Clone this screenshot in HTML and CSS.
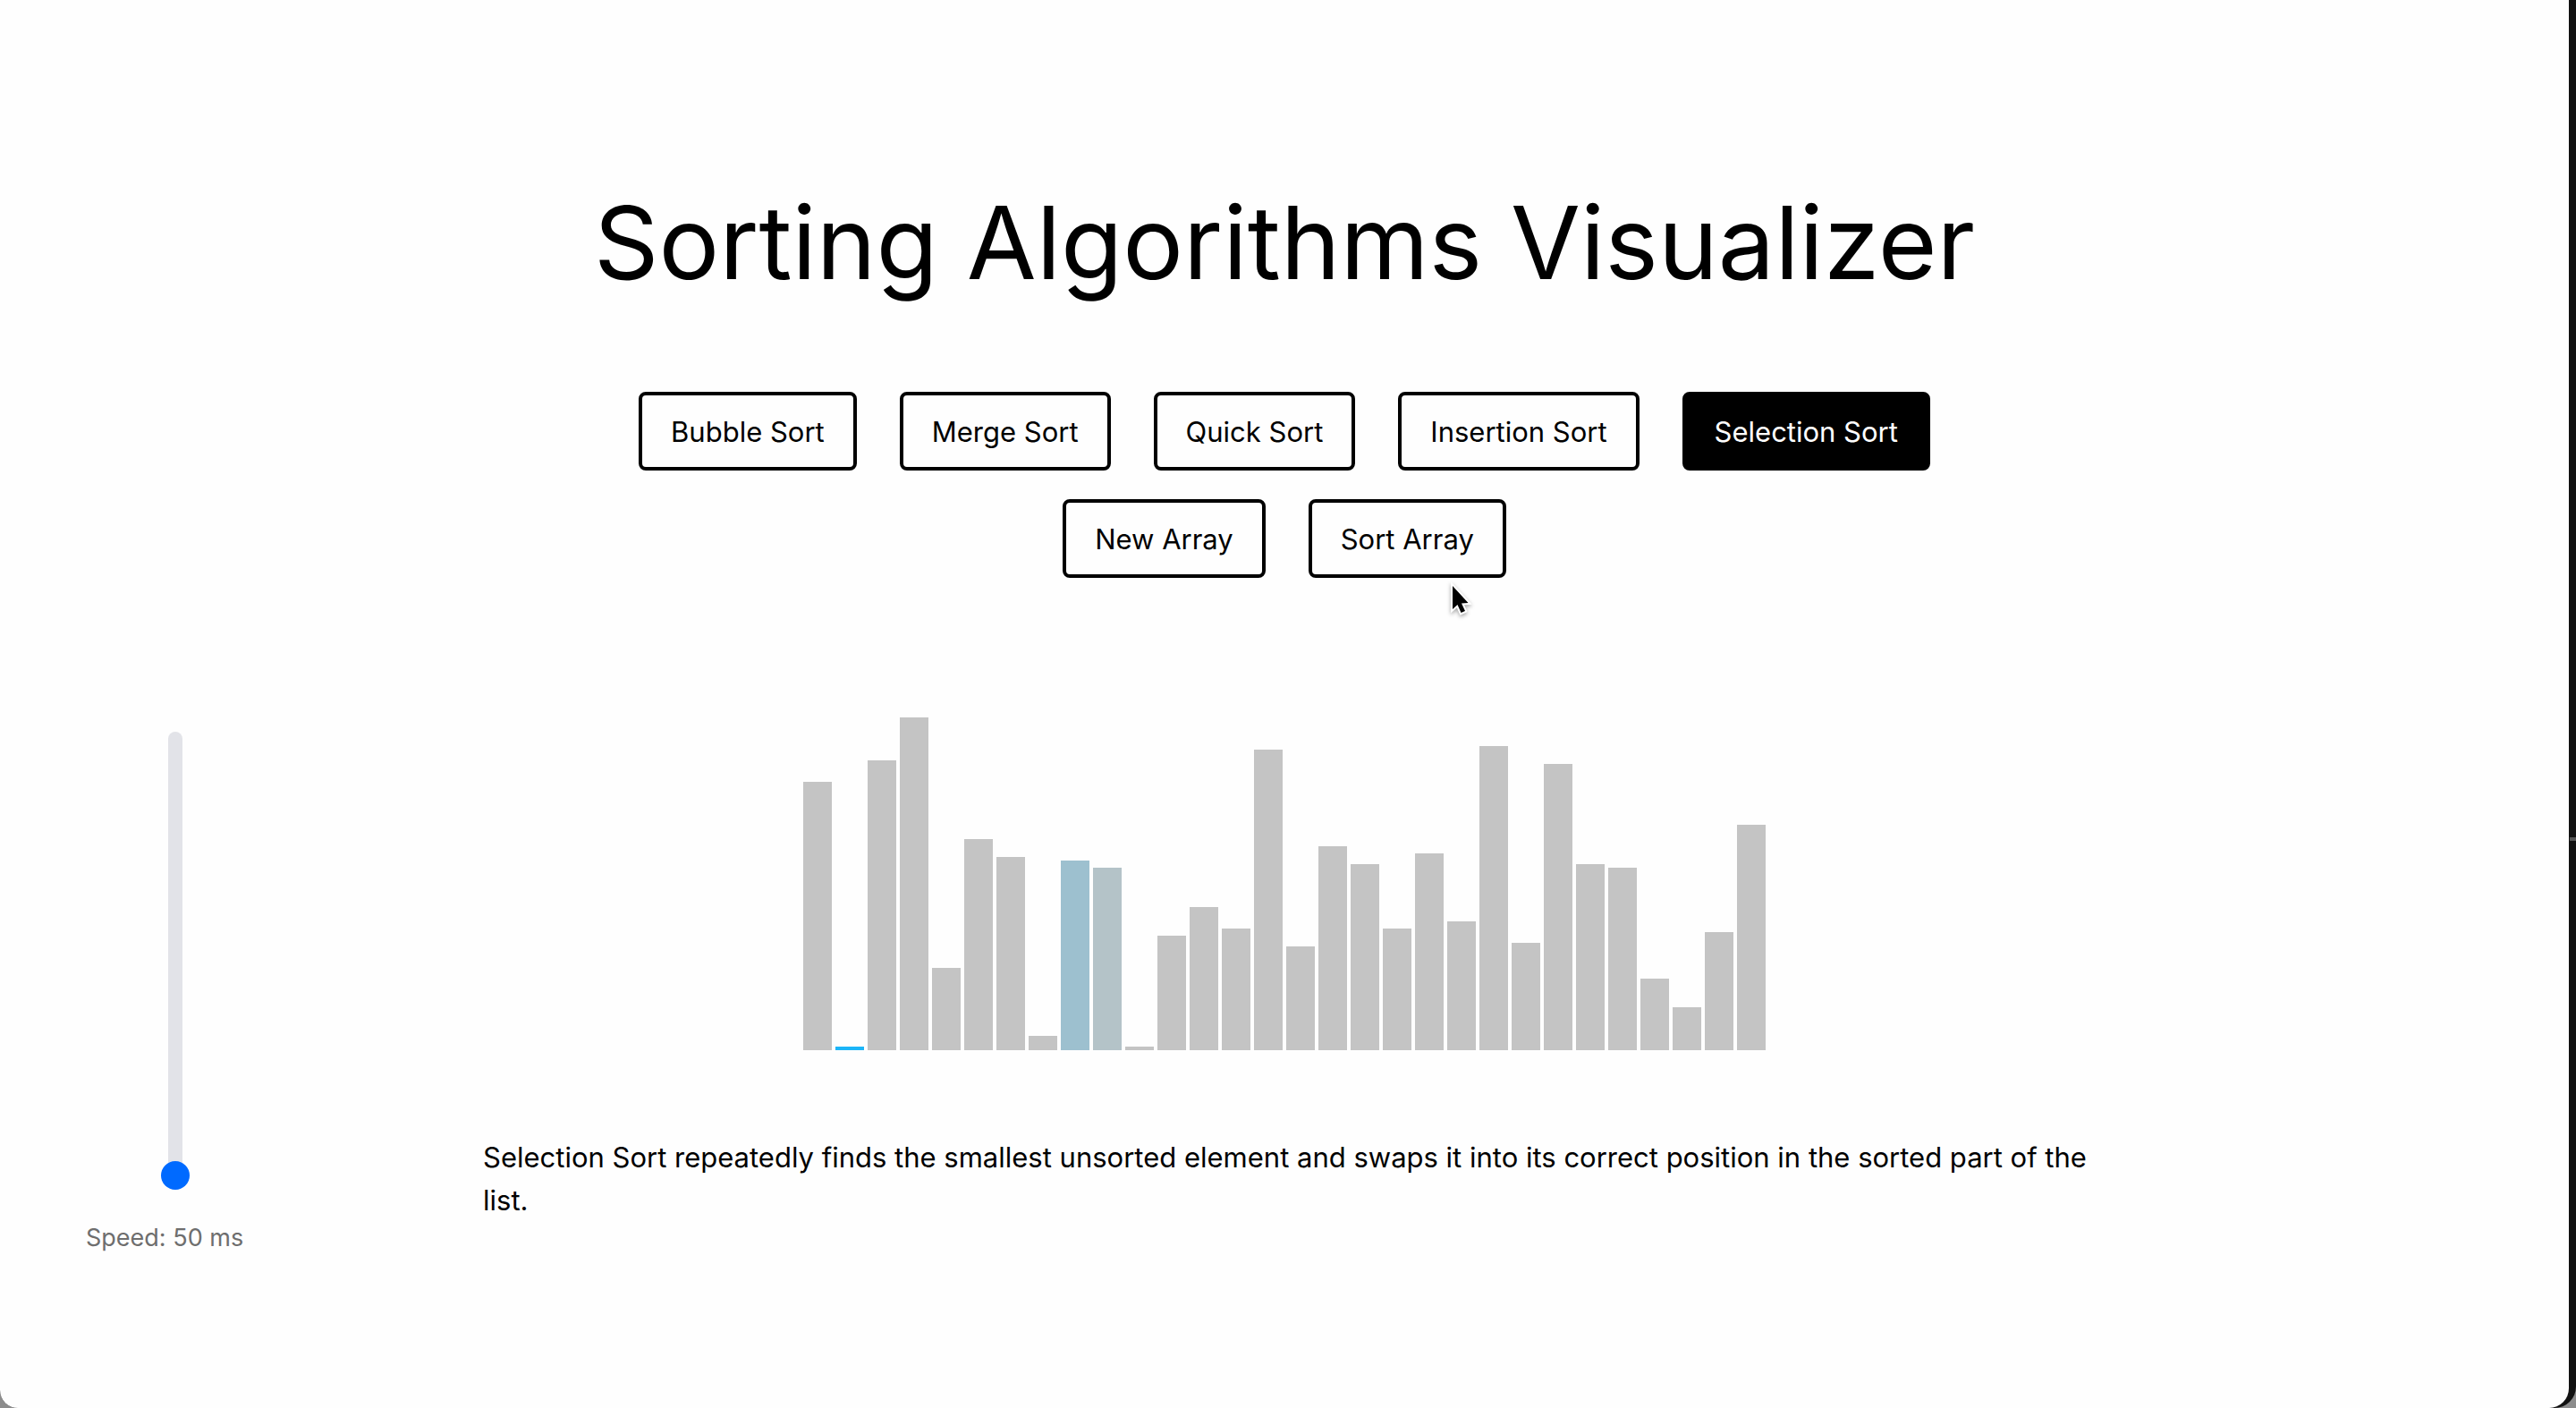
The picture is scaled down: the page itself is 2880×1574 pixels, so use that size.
FILE: index.html
```html
<!DOCTYPE html>
<html lang="en">
<head>
  <meta charset="utf-8">
  <meta name="viewport" content="width=device-width, initial-scale=1">
  <title>Sorting Algorithms Visualizer</title>
  <link rel="stylesheet" href="styles.css">
</head>
<body>
  <div class="frame">
    <main class="page">
      <header class="header">
        <h1 class="title">Sorting Algorithms Visualizer</h1>
        <div class="button-row">
          <button type="button" class="button">Bubble Sort</button>
          <button type="button" class="button">Merge Sort</button>
          <button type="button" class="button">Quick Sort</button>
          <button type="button" class="button">Insertion Sort</button>
          <button type="button" class="button button-active" aria-pressed="true">Selection Sort</button>
        </div>
        <div class="button-row">
          <button type="button" class="button">New Array</button>
          <button type="button" class="button">Sort Array</button>
        </div>
      </header>

      <aside class="speed">
        <input class="speed-slider" id="speed" type="range" min="50" max="1000" value="50">
        <label class="speed-label" for="speed">Speed: 50 ms</label>
      </aside>

      <section class="chart" aria-label="Array values">
        <div class="bar" style="height: 75%"></div>
        <div class="bar bar-minimum" style="height: 1%"></div>
        <div class="bar" style="height: 81%"></div>
        <div class="bar" style="height: 93%"></div>
        <div class="bar" style="height: 23%"></div>
        <div class="bar" style="height: 59%"></div>
        <div class="bar" style="height: 54%"></div>
        <div class="bar" style="height: 4%"></div>
        <div class="bar bar-current" style="height: 53%"></div>
        <div class="bar bar-fading" style="height: 51%"></div>
        <div class="bar" style="height: 1%"></div>
        <div class="bar" style="height: 32%"></div>
        <div class="bar" style="height: 40%"></div>
        <div class="bar" style="height: 34%"></div>
        <div class="bar" style="height: 84%"></div>
        <div class="bar" style="height: 29%"></div>
        <div class="bar" style="height: 57%"></div>
        <div class="bar" style="height: 52%"></div>
        <div class="bar" style="height: 34%"></div>
        <div class="bar" style="height: 55%"></div>
        <div class="bar" style="height: 36%"></div>
        <div class="bar" style="height: 85%"></div>
        <div class="bar" style="height: 30%"></div>
        <div class="bar" style="height: 80%"></div>
        <div class="bar" style="height: 52%"></div>
        <div class="bar" style="height: 51%"></div>
        <div class="bar" style="height: 20%"></div>
        <div class="bar" style="height: 12%"></div>
        <div class="bar" style="height: 33%"></div>
        <div class="bar" style="height: 63%"></div>
      </section>

      <p class="description">Selection Sort repeatedly finds the smallest unsorted element and swaps it into its correct position in the sorted part of the list.</p>
    </main>
    <span class="edge-mark"></span>
  </div>

  <svg class="cursor" width="28" height="42" viewBox="0 0 28 42" aria-hidden="true">
    <path d="M4 5 L4 31 L9.500 26 L13.500 35 L18 33 L14 24.500 L21.500 24 Z" fill="#000" stroke="#fff" stroke-width="4" stroke-linejoin="miter" paint-order="stroke"/>
  </svg>
</body>
</html>
```

FILE: styles.css
```css
* {
  box-sizing: border-box;
}

body {
  margin: 0;
  background: #8c8c8c;
  color: #000;
  font-family: Inter, "Liberation Sans", sans-serif;
  font-size: 31px;
  line-height: 48px;
}

.frame {
  position: relative;
  display: flex;
  min-height: 100vh;
  padding-right: 8px;
  background: #111;
  border-radius: 0 0 24px 20px;
}

.page {
  flex: 1;
  display: grid;
  grid-template-columns: 1fr minmax(0, 1792px) 1fr;
  grid-template-rows: auto auto 1fr;
  padding-top: 192px;
  background: #fefefe;
  border-radius: 0 0 22px 20px;
}

.header {
  grid-column: 1 / -1;
  display: flex;
  flex-direction: column;
  align-items: center;
  gap: 32px;
  margin-bottom: 128px;
}

.title {
  margin: 0 0 56px;
  font-size: 113px;
  font-weight: 400;
  line-height: 158px;
}

.button-row {
  display: flex;
  flex-wrap: wrap;
  justify-content: center;
  gap: 32px 48px;
}

.button {
  height: 88px;
  padding: 2px 32px 0;
  border: 4px solid #000;
  border-radius: 8px;
  background: #fefefe;
  color: #000;
  font: inherit;
  cursor: pointer;
}

.button-active {
  background: #000;
  color: #fff;
}

.speed {
  grid-column: 1;
  grid-row: 2 / 4;
  display: flex;
  flex-direction: column;
  align-items: flex-start;
  gap: 30px;
  padding: 44px 0 0 96px;
}

.speed-slider {
  appearance: none;
  writing-mode: vertical-lr;
  direction: rtl;
  width: 32px;
  height: 512px;
  margin: 0 0 0 84px;
  background: transparent;
}

.speed-slider::-webkit-slider-runnable-track {
  width: 16px;
  border-radius: 8px;
  background: #e2e3e8;
}

.speed-slider::-webkit-slider-thumb {
  appearance: none;
  width: 32px;
  height: 32px;
  margin-left: -8px;
  border-radius: 50%;
  background: #006aff;
}

.speed-label {
  color: #6e6e6e;
  font-size: 27px;
}

.chart {
  grid-column: 2;
  display: flex;
  justify-content: center;
  align-items: flex-end;
  gap: 4px;
  height: 400px;
}

.bar {
  width: 32px;
  background: #c4c4c4;
}

.bar-minimum {
  background: #1cb5f8;
}

.bar-current {
  background: #9dc0cf;
}

.bar-fading {
  background: #b4c3c8;
}

.description {
  grid-column: 2;
  margin: 96px -16px 0 0;
}

.edge-mark {
  position: absolute;
  top: 936px;
  right: 0;
  width: 7px;
  height: 4px;
  background: #555;
}

.cursor {
  position: absolute;
  top: 650px;
  left: 1620px;
  filter: drop-shadow(0 2px 2px rgba(0, 0, 0, 0.35));
}
```
